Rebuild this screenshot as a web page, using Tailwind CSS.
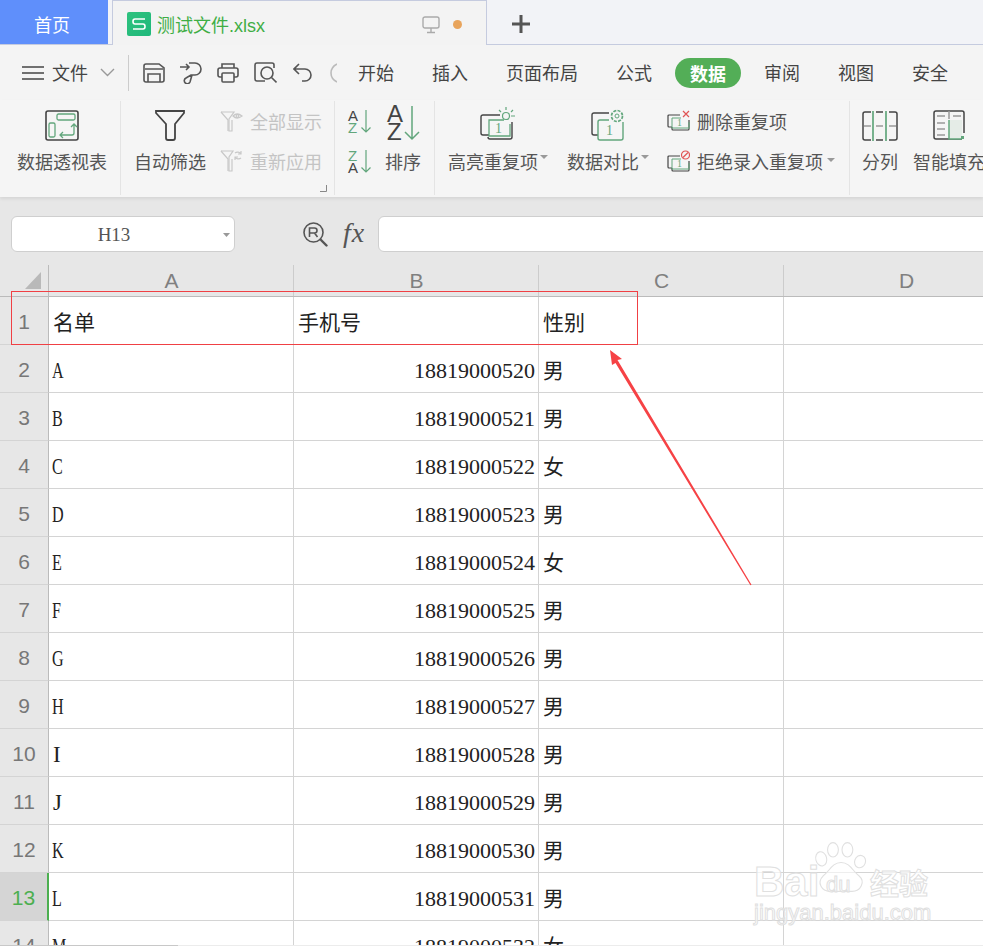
<!DOCTYPE html>
<html lang="zh-CN">
<head>
  <meta charset="UTF-8">
  <title>测试文件.xlsx</title>
  <script src="https://cdn.jsdelivr.net/npm/@tailwindcss/browser@4"></script>
</head>
<body class="bg-white font-['Noto_Sans_CJK_SC','Noto_Sans',sans-serif] text-[#555]">
<div class="relative w-[983px] h-[946px] overflow-hidden">

  <!-- tabs -->
  <div class="flex h-[45px] bg-[#f2f3f7] border-b border-[#c5cbdf]">
    <div class="w-[108px] h-[44px] pt-[5px] pr-[4px] bg-[#5f8ffb] text-white text-[18px] flex items-center justify-center">首页</div>
    <div class="ml-1 w-[375px] h-[45px] bg-[#f3f3f3] border border-b-0 border-[#c5cbdf] flex items-center pl-[14px] relative">
      <div class="w-6 h-6 mt-[1px] rounded-[2px] bg-gradient-to-br from-[#2ec27e] to-[#1fb87b] flex items-center justify-center">
        <svg width="16" height="14" viewBox="0 0 16 14" fill="none" stroke="#fff" stroke-width="1.6"><path d="M14 2H4Q2 2 2 4.5T4 7h8q2 0 2 2.5T12 12H2"/></svg>
      </div>
      <span class="ml-[6px] pt-[5px] text-[18px] text-[#3fae45]">测试文件<span class="font-['Liberation_Sans']">.xlsx</span></span>
      <svg class="ml-[157px] mt-[3px]" width="18" height="18" viewBox="0 0 18 18" fill="none" stroke="#aaa" stroke-width="1.4"><rect x="1" y="1" width="16" height="11" rx="2"/><path d="M9 12v4M5 16.5h8"/></svg>
      <div class="ml-[13px] mt-[2px] w-[9px] h-[9px] rounded-full bg-[#e8a45c]"></div>
    </div>
    <svg class="ml-[25px] mt-[15px]" width="18" height="18" viewBox="0 0 18 18" stroke="#555" stroke-width="3"><path d="M9 0v18M0 9h18"/></svg>
  </div>

  <!-- menu row -->
  <div class="flex items-center h-[55px] bg-[#f4f4f4] pl-[22px] text-[18px] text-[#444]">
    <svg width="22" height="14" viewBox="0 0 22 14" stroke="#444" stroke-width="1.5"><path d="M0 1h22M0 7h22M0 13h22"/></svg>
    <span class="ml-2">文件</span>
    <svg class="ml-3" width="15" height="9" viewBox="0 0 15 9" fill="none" stroke="#999" stroke-width="1.4"><path d="M1 1l6.5 6.5L14 1"/></svg>
    <div class="ml-[13px] w-px h-[36px] bg-[#ccc]"></div>
    <svg class="ml-[14px]" width="22" height="20" viewBox="0 0 22 20" fill="none" stroke="#555" stroke-width="1.6"><path d="M3 1h13l5 4v12q0 2-2 2H3q-2 0-2-2V3q0-2 2-2z"/><path d="M2 6h18M5 19v-8h12v8"/></svg>
    <svg class="ml-[15px]" width="22" height="22" viewBox="0 0 22 22" fill="none" stroke="#555" stroke-width="1.6"><path d="M0 5h9M6 2l3 3-3 3M9 1h6a6 6 0 0 1 0 12h-4l-5 3a3 3 0 1 0 4 4l2-7"/></svg>
    <svg class="ml-[15px]" width="22" height="20" viewBox="0 0 22 20" fill="none" stroke="#555" stroke-width="1.6"><path d="M5 5V1h12v4M5 14H3q-2 0-2-2V7q0-2 2-2h16q2 0 2 2v5q0 2-2 2h-2"/><rect x="5" y="10" width="12" height="9" rx="1"/></svg>
    <svg class="ml-[15px]" width="23" height="22" viewBox="0 0 23 22" fill="none" stroke="#555" stroke-width="1.6"><path d="M20 6V3q0-2-2-2H3Q1 1 1 3v14q0 2 2 2h8"/><circle cx="13" cy="11" r="6"/><path d="M17.5 15.5l5 5"/></svg>
    <svg class="ml-4" width="19" height="19" viewBox="0 0 19 19" fill="none" stroke="#555" stroke-width="1.6"><path d="M6 1L1 6l5 5M1 6h11a6 6 0 0 1 0 12H9"/></svg>
    <svg class="ml-[18px]" width="7" height="20" viewBox="0 0 7 20" fill="none" stroke="#bbb" stroke-width="1.6"><path d="M7 1Q1 4 1 10t6 9"/></svg>
    <div class="ml-[21px] flex items-center gap-[38px]">
      <span>开始</span>
      <span>插入</span>
      <span>页面布局</span>
      <span>公式</span>
      <span class="-ml-[15px] -mr-[15px] px-[15px] h-[30px] leading-[30px] rounded-[15px] bg-[#53ae57] text-white font-bold">数据</span>
      <span>审阅</span>
      <span>视图</span>
      <span>安全</span>
    </div>
  </div>

  <!-- ribbon -->
  <div class="relative z-10 flex h-[97px] pt-px bg-[#f5f5f5] text-[18px] shadow-[0_2px_3px_rgba(0,0,0,0.08)]">
    <div class="shrink-0 w-[121px] h-[94px] pl-1 border-r border-[#e4e4e4] flex justify-center">
      <div class="w-[90px] flex flex-col items-center">
        <div class="h-10 flex items-end">
          <svg width="34" height="31" viewBox="0 0 34 31" fill="none" stroke-width="1.3"><rect x="1" y="1" width="32" height="29" rx="2" stroke="#444" stroke-width="1.6"/><rect x="12" y="4" width="18" height="6" rx="1.5" stroke="#62a67c"/><rect x="4" y="13" width="6" height="14" rx="1.5" stroke="#62a67c"/><path d="M15 25h12q2 0 2-2v-8M26 17l3-3 3 3M18 22l-3 3 3 3" stroke="#62a67c"/></svg>
        </div>
        <div class="h-10 flex items-center whitespace-nowrap">数据透视表</div>
      </div>
    </div>

    <div class="shrink-0 relative w-[214px] h-[94px] pl-[13px] border-r border-[#e4e4e4] flex">
      <div class="w-[72px] flex flex-col items-center">
        <div class="h-10 flex items-end">
          <svg width="32" height="32" viewBox="0 0 32 32" fill="none" stroke="#444" stroke-width="1.8"><path d="M2 2h28v2L21 15v14q0 2-2 2h-5q-2 0-2-2V15L2 4z"/></svg>
        </div>
        <div class="h-10 flex items-center whitespace-nowrap">自动筛选</div>
      </div>
      <div class="ml-[14px] text-[#c4c4c4]">
        <div class="h-10 flex items-center gap-[7px]">
          <svg width="23" height="21" viewBox="0 0 23 21" fill="none" stroke="#c8c8c8" stroke-width="1.2"><path d="M1 1h13l-5 7v12h3V9"/><path d="M1 1l7 8v11"/><path d="M13 5q4-4 9 0q-5 4-9 0z"/><circle cx="17.5" cy="5" r="1.3"/></svg>
          <span>全部显示</span>
        </div>
        <div class="h-10 flex items-center gap-[7px]">
          <svg width="23" height="22" viewBox="0 0 23 22" fill="none" stroke="#c8c8c8" stroke-width="1.2"><path d="M1 1h12l-4 6v14h3V9"/><path d="M1 1l7 8v12"/><path d="M21 4a4 4 0 0 0-6-1M15 7a4 4 0 0 0 6 1M21 1v3h-3M15 10V7h3"/></svg>
          <span>重新应用</span>
        </div>
      </div>
      <svg class="absolute left-[199px] top-[84px]" width="7" height="7" viewBox="0 0 7 7" fill="none" stroke="#888"><path d="M6.5 0v6.5H0"/></svg>
    </div>

    <div class="shrink-0 w-[100px] h-[94px] pl-3 border-r border-[#e4e4e4] flex">
      <div class="w-[25px]">
        <div class="h-10 flex items-center">
          <svg class="overflow-visible" width="25" height="25" viewBox="0 0 25 25" fill="none" font-family="Liberation Sans" font-size="15"><text x="1" y="12" fill="#444">A</text><text x="1" y="24" fill="#62a67c">Z</text><path d="M19 1v22M14.5 18.5l4.5 4.5 4.5-4.5" stroke="#62a67c" stroke-width="1.2"/></svg>
        </div>
        <div class="h-10 flex items-center">
          <svg class="overflow-visible" width="25" height="25" viewBox="0 0 25 25" fill="none" font-family="Liberation Sans" font-size="15"><text x="1" y="12" fill="#62a67c">Z</text><text x="1" y="24" fill="#444">A</text><path d="M19 1v22M14.5 18.5l4.5 4.5 4.5-4.5" stroke="#62a67c" stroke-width="1.2"/></svg>
        </div>
      </div>
      <div class="ml-[13px] w-9 flex flex-col items-center">
        <div class="h-10 flex items-end">
          <svg class="overflow-visible" width="36" height="36" viewBox="0 0 36 36" fill="none" font-family="Liberation Sans" font-size="24"><text x="2" y="17" fill="#444">A</text><text x="2" y="35" fill="#444">Z</text><path d="M27 1v33M20 27l7 7 7-7" stroke="#62a67c" stroke-width="1.5"/></svg>
        </div>
        <div class="h-10 flex items-center whitespace-nowrap">排序</div>
      </div>
    </div>

    <div class="shrink-0 w-[415px] h-[94px] pl-3 border-r border-[#e4e4e4] flex">
      <div class="w-[102px] flex flex-col items-center">
        <div class="h-10 flex items-end">
          <svg width="36" height="34" viewBox="0 0 36 34" fill="none" font-family="Liberation Serif" font-size="14"><path d="M20 8H3Q1 8 1 10v16q0 2 2 2h6" stroke="#444" stroke-width="1.4"/><path d="M32 15v15q0 2-2 2H10q-2 0-2-2" stroke="#444" stroke-width="1.4"/><path d="M24 13H9v16h21V17" stroke="#62a67c" stroke-width="1.3"/><text x="15" y="26" fill="#62a67c">1</text><circle cx="26" cy="9" r="3.5" stroke="#62a67c" stroke-width="1.2"/><path d="M26 0v3M19 3l2 2M33 3l-2 2M31 9h4" stroke="#62a67c" stroke-width="1.2"/></svg>
        </div>
        <div class="h-10 flex items-center whitespace-nowrap">高亮重复项<svg class="mb-2 ml-[2px]" width="8" height="4" viewBox="0 0 8 4"><path d="M0 0h8L4 4z" fill="#999"/></svg></div>
      </div>
      <div class="ml-[17px] w-[84px] flex flex-col items-center">
        <div class="h-10 flex items-end">
          <svg width="34" height="32" viewBox="0 0 34 32" fill="none" font-family="Liberation Serif" font-size="14"><path d="M18 4H3Q1 4 1 6v18q0 2 2 2h4" stroke="#444" stroke-width="1.4"/><path d="M18 11H9q-2 0-2 2v16q0 2 2 2h21q2 0 2-2V13" stroke="#62a67c" stroke-width="1.4"/><text x="15" y="26" fill="#62a67c">1</text><circle cx="26" cy="7" r="5.5" stroke="#62a67c" stroke-width="1.7" stroke-dasharray="3 1.3"/><circle cx="26" cy="7" r="2" stroke="#62a67c"/></svg>
        </div>
        <div class="h-10 flex items-center whitespace-nowrap">数据对比<svg class="mb-2 ml-[2px]" width="8" height="4" viewBox="0 0 8 4"><path d="M0 0h8L4 4z" fill="#999"/></svg></div>
      </div>
      <div class="ml-[17px]">
        <div class="h-10 flex items-center gap-[7px]">
          <svg width="23" height="22" viewBox="0 0 23 22" fill="none" font-family="Liberation Serif" font-size="10"><path d="M13 5H2Q1 5 1 6v10q0 1 1 1h3M5 17v2q0 1 1 1h15q1 0 1-1V10" stroke="#444" stroke-width="1.2"/><path d="M14 8H5v10h17v-6" stroke="#62a67c"/><text x="10" y="16" fill="#62a67c">1</text><path d="M16 1l6 6M22 1l-6 6" stroke="#e05555" stroke-width="1.2"/></svg>
          <span>删除重复项</span>
        </div>
        <div class="h-10 flex items-center gap-[7px]">
          <svg width="23" height="22" viewBox="0 0 23 22" fill="none" font-family="Liberation Serif" font-size="10"><path d="M13 6H2Q1 6 1 7v10q0 1 1 1h3M5 18v2q0 1 1 1h15q1 0 1-1V11" stroke="#444" stroke-width="1.2"/><path d="M14 9H5v10h17v-6" stroke="#62a67c"/><text x="10" y="17" fill="#62a67c">1</text><circle cx="18.5" cy="5" r="4" stroke="#e05555" stroke-width="1.2"/><path d="M16 7.5L21 2.5" stroke="#e05555" stroke-width="1.2"/></svg>
          <span class="whitespace-nowrap">拒绝录入重复项</span>
          <svg class="-ml-[3px] mb-[2px]" width="8" height="4" viewBox="0 0 8 4"><path d="M0 0h8L4 4z" fill="#999"/></svg>
        </div>
      </div>
    </div>

    <div class="shrink-0 pl-3 flex">
      <div class="w-9 flex flex-col items-center">
        <div class="h-10 flex items-end">
          <svg width="36" height="30" viewBox="0 0 36 30" fill="none" stroke-width="1.5"><path d="M9 1H3Q1 1 1 3v24q0 2 2 2h6M27 1h6q2 0 2 2v24q0 2-2 2h-6M14 1h7M14 29h7" stroke="#444"/><path d="M2 15h7M14 15h7M27 15h7" stroke="#999"/><path d="M11 0v30M24 0v30" stroke="#62a67c" stroke-width="1.7"/></svg>
        </div>
        <div class="h-10 flex items-center whitespace-nowrap">分列</div>
      </div>
      <div class="ml-[15px] w-[72px] flex flex-col items-center">
        <div class="h-10 flex items-end">
          <svg width="32" height="31" viewBox="0 0 32 31" fill="none" stroke-width="1.5"><path d="M29 29H3q-2 0-2-2V3q0-2 2-2h26q2 0 2 2v20" stroke="#444"/><path d="M16 1v8M4 6h8M20 6h8M4 13h8M4 19h8M4 25h8" stroke="#999"/><rect x="16" y="10" width="13" height="19" fill="#e5ece7"/><path d="M16 10v19h13" stroke="#62a67c"/><rect x="28" y="26" width="3" height="3" fill="#62a67c"/></svg>
        </div>
        <div class="h-10 flex items-center whitespace-nowrap">智能填充</div>
      </div>
    </div>
  </div>

  <!-- formula bar -->
  <div class="flex h-[55px] pt-[19px] pl-[11px] bg-[#e7e7e7]">
    <div class="shrink-0 relative w-[224px] h-9 bg-white border border-[#cfcfcf] rounded-[6px] flex items-center justify-center font-['Liberation_Serif',serif] text-[19px] text-[#555] pr-[18px] pt-[3px]">
      H13
      <svg class="absolute right-[4px] top-[16px]" width="7" height="4" viewBox="0 0 7 4"><path d="M0 0h7L3.5 4z" fill="#999"/></svg>
    </div>
    <svg class="shrink-0 ml-[68px] mt-[6px]" width="25" height="25" viewBox="0 0 25 25" fill="none" stroke="#555" stroke-width="1.6"><circle cx="10.5" cy="10.5" r="9.5"/><path d="M6.5 15V6h5a2.5 2.5 0 0 1 0 5h-5M11.5 11l3 4"/><path d="M17.5 17.5l6 6" stroke-width="2.4" stroke-linecap="round"/></svg>
    <span class="shrink-0 w-[35px] ml-[15px] mt-[2px] font-['Liberation_Serif',serif] italic text-[28px] leading-[30px] tracking-[1px] text-[#555]">fx</span>
    <div class="flex-1 -mr-3 h-9 bg-white border border-[#cfcfcf] rounded-[6px]"></div>
  </div>

  <!-- column headers -->
  <div class="grid grid-cols-[49px_245px_245px_245px_245px] h-[45px] bg-[#e7e7e7] border-b border-[#bbb] font-['Liberation_Sans',sans-serif] text-[21px] text-[#808080]">
    <div class="relative after:absolute after:right-0 after:top-[13px] after:bottom-0 after:w-px after:bg-[#bbb]">
      <svg class="absolute left-[25px] top-[20px]" width="16" height="17" viewBox="0 0 16 17"><path d="M16 0v17H0z" fill="#b9b9b9"/></svg>
    </div>
    <div class="relative flex items-end justify-center after:absolute after:right-0 after:top-[13px] after:bottom-0 after:w-px after:bg-[#ccc]">A</div>
    <div class="relative flex items-end justify-center after:absolute after:right-0 after:top-[13px] after:bottom-0 after:w-px after:bg-[#ccc]">B</div>
    <div class="relative flex items-end justify-center after:absolute after:right-0 after:top-[13px] after:bottom-0 after:w-px after:bg-[#ccc]">C</div>
    <div class="relative flex items-end justify-center">D</div>
  </div>

  <!-- sheet -->
  <div class="font-['Liberation_Serif','Noto_Sans_CJK_SC',serif] text-[21px] text-[#222] *:grid *:grid-cols-[49px_245px_245px_245px_245px] *:h-12">
    <div class="*:border-r *:border-b *:border-[#d4d4d4] *:flex *:items-center *:pt-[6px] *:pl-[4px]">
      <div class="bg-[#e7e7e7] border-r-[#bbb]! justify-center pl-0! pt-[3px]! font-['Liberation_Sans'] text-[21px] text-[#777]">1</div>
      <div>名单</div><div>手机号</div><div>性别</div><div></div>
    </div>
    <div class="*:border-r *:border-b *:border-[#d4d4d4] *:flex *:items-center *:pt-[6px] *:pl-[4px]">
      <div class="bg-[#e7e7e7] border-r-[#bbb]! justify-center pl-0! pt-[3px]! font-['Liberation_Sans'] text-[21px] text-[#777]">2</div>
      <div><span class="-ml-px origin-left scale-x-[0.7] text-[23px]">A</span></div><div class="justify-end pr-[3px] pt-[3px]! text-[22px]">18819000520</div><div>男</div><div></div>
    </div>
    <div class="*:border-r *:border-b *:border-[#d4d4d4] *:flex *:items-center *:pt-[6px] *:pl-[4px]">
      <div class="bg-[#e7e7e7] border-r-[#bbb]! justify-center pl-0! pt-[3px]! font-['Liberation_Sans'] text-[21px] text-[#777]">3</div>
      <div><span class="-ml-px origin-left scale-x-[0.7] text-[23px]">B</span></div><div class="justify-end pr-[3px] pt-[3px]! text-[22px]">18819000521</div><div>男</div><div></div>
    </div>
    <div class="*:border-r *:border-b *:border-[#d4d4d4] *:flex *:items-center *:pt-[6px] *:pl-[4px]">
      <div class="bg-[#e7e7e7] border-r-[#bbb]! justify-center pl-0! pt-[3px]! font-['Liberation_Sans'] text-[21px] text-[#777]">4</div>
      <div><span class="-ml-px origin-left scale-x-[0.7] text-[23px]">C</span></div><div class="justify-end pr-[3px] pt-[3px]! text-[22px]">18819000522</div><div>女</div><div></div>
    </div>
    <div class="*:border-r *:border-b *:border-[#d4d4d4] *:flex *:items-center *:pt-[6px] *:pl-[4px]">
      <div class="bg-[#e7e7e7] border-r-[#bbb]! justify-center pl-0! pt-[3px]! font-['Liberation_Sans'] text-[21px] text-[#777]">5</div>
      <div><span class="-ml-px origin-left scale-x-[0.7] text-[23px]">D</span></div><div class="justify-end pr-[3px] pt-[3px]! text-[22px]">18819000523</div><div>男</div><div></div>
    </div>
    <div class="*:border-r *:border-b *:border-[#d4d4d4] *:flex *:items-center *:pt-[6px] *:pl-[4px]">
      <div class="bg-[#e7e7e7] border-r-[#bbb]! justify-center pl-0! pt-[3px]! font-['Liberation_Sans'] text-[21px] text-[#777]">6</div>
      <div><span class="-ml-px origin-left scale-x-[0.7] text-[23px]">E</span></div><div class="justify-end pr-[3px] pt-[3px]! text-[22px]">18819000524</div><div>女</div><div></div>
    </div>
    <div class="*:border-r *:border-b *:border-[#d4d4d4] *:flex *:items-center *:pt-[6px] *:pl-[4px]">
      <div class="bg-[#e7e7e7] border-r-[#bbb]! justify-center pl-0! pt-[3px]! font-['Liberation_Sans'] text-[21px] text-[#777]">7</div>
      <div><span class="-ml-px origin-left scale-x-[0.7] text-[23px]">F</span></div><div class="justify-end pr-[3px] pt-[3px]! text-[22px]">18819000525</div><div>男</div><div></div>
    </div>
    <div class="*:border-r *:border-b *:border-[#d4d4d4] *:flex *:items-center *:pt-[6px] *:pl-[4px]">
      <div class="bg-[#e7e7e7] border-r-[#bbb]! justify-center pl-0! pt-[3px]! font-['Liberation_Sans'] text-[21px] text-[#777]">8</div>
      <div><span class="-ml-px origin-left scale-x-[0.7] text-[23px]">G</span></div><div class="justify-end pr-[3px] pt-[3px]! text-[22px]">18819000526</div><div>男</div><div></div>
    </div>
    <div class="*:border-r *:border-b *:border-[#d4d4d4] *:flex *:items-center *:pt-[6px] *:pl-[4px]">
      <div class="bg-[#e7e7e7] border-r-[#bbb]! justify-center pl-0! pt-[3px]! font-['Liberation_Sans'] text-[21px] text-[#777]">9</div>
      <div><span class="-ml-px origin-left scale-x-[0.7] text-[23px]">H</span></div><div class="justify-end pr-[3px] pt-[3px]! text-[22px]">18819000527</div><div>男</div><div></div>
    </div>
    <div class="*:border-r *:border-b *:border-[#d4d4d4] *:flex *:items-center *:pt-[6px] *:pl-[4px]">
      <div class="bg-[#e7e7e7] border-r-[#bbb]! justify-center pl-0! pt-[3px]! font-['Liberation_Sans'] text-[21px] text-[#777]">10</div>
      <div><span class="text-[23px]">I</span></div><div class="justify-end pr-[3px] pt-[3px]! text-[22px]">18819000528</div><div>男</div><div></div>
    </div>
    <div class="*:border-r *:border-b *:border-[#d4d4d4] *:flex *:items-center *:pt-[6px] *:pl-[4px]">
      <div class="bg-[#e7e7e7] border-r-[#bbb]! justify-center pl-0! pt-[3px]! font-['Liberation_Sans'] text-[21px] text-[#777]">11</div>
      <div><span class="text-[23px]">J</span></div><div class="justify-end pr-[3px] pt-[3px]! text-[22px]">18819000529</div><div>男</div><div></div>
    </div>
    <div class="*:border-r *:border-b *:border-[#d4d4d4] *:flex *:items-center *:pt-[6px] *:pl-[4px]">
      <div class="bg-[#e7e7e7] border-r-[#bbb]! justify-center pl-0! pt-[3px]! font-['Liberation_Sans'] text-[21px] text-[#777]">12</div>
      <div><span class="-ml-px origin-left scale-x-[0.7] text-[23px]">K</span></div><div class="justify-end pr-[3px] pt-[3px]! text-[22px]">18819000530</div><div>男</div><div></div>
    </div>
    <div class="*:border-r *:border-b *:border-[#d4d4d4] *:flex *:items-center *:pt-[6px] *:pl-[4px]">
      <div class="bg-[#d5d5d5] border-r-2! border-r-[#4caf50]! justify-center pl-0! pt-[3px]! font-['Liberation_Sans'] text-[21px] text-[#4caf50]">13</div>
      <div><span class="-ml-px origin-left scale-x-[0.7] text-[23px]">L</span></div><div class="justify-end pr-[3px] pt-[3px]! text-[22px]">18819000531</div><div>男</div><div></div>
    </div>
    <div class="*:border-r *:border-b *:border-[#d4d4d4] *:flex *:items-center *:pt-[6px] *:pl-[4px]">
      <div class="bg-[#e7e7e7] border-r-[#bbb]! justify-center pl-0! pt-[3px]! font-['Liberation_Sans'] text-[21px] text-[#777]">14</div>
      <div><span class="-ml-px origin-left scale-x-[0.7] text-[23px]">M</span></div><div class="justify-end pr-[3px] pt-[3px]! text-[22px]">18819000532</div><div>女</div><div></div>
    </div>
  </div>

  <!-- bottom edge of the capture -->
  <div class="absolute left-0 bottom-0 w-full h-px bg-[#ececec]"></div>
  <div class="absolute left-0 bottom-0 w-[178px] h-px bg-[#c8c8c8]"></div>

  <!-- red annotations -->
  <div class="absolute left-[11px] top-[291px] w-[627px] h-[54px] border border-[#f04044]"></div>
  <svg class="absolute left-0 top-0 pointer-events-none" width="983" height="946" viewBox="0 0 983 946">
    <path d="M610 350l12 9-4.5 1L751.5 584.7 750.4 585.3 615.5 363l-3.5 2z" fill="#f64245"/>
  </svg>

  <!-- watermark -->
  <div class="absolute left-[752px] top-[838px] w-[180px] h-[90px] font-['Liberation_Sans',sans-serif]">
    <svg class="absolute left-[62px] top-[2px]" width="56" height="54" viewBox="0 0 62 58" fill="#ffffff" fill-opacity="0.6" stroke="#e0e0e0" stroke-width="1.2">
      <ellipse cx="8" cy="20" rx="6" ry="8" transform="rotate(-15 8 20)"/>
      <ellipse cx="21" cy="10" rx="6" ry="8"/>
      <ellipse cx="37" cy="10" rx="6" ry="8"/>
      <ellipse cx="51" cy="23" rx="6" ry="7" transform="rotate(20 51 23)"/>
      <path d="M30 24c10 0 13 10 20 15 7 6 2 17-8 17H18C8 56 3 46 10 39c7-5 10-15 20-15z"/>
    </svg>
    <span class="absolute left-[2px] top-[23px] text-[42px] leading-[42px] font-bold text-white/70 [-webkit-text-stroke:1px_#e0e0e0]">Bai</span>
    <span class="absolute left-[74px] top-[35px] text-[22px] leading-[24px] text-white/70 [-webkit-text-stroke:1px_#e0e0e0]">du</span>
    <span class="absolute left-[118px] top-[28px] text-[29px] leading-[32px] font-['Noto_Sans_CJK_SC'] font-bold text-white/70 [-webkit-text-stroke:1px_#e0e0e0]">经验</span>
    <span class="absolute left-[2px] top-[63px] text-[22px] leading-[24px] text-white/70 [-webkit-text-stroke:1px_#e0e0e0]">jingyan.baidu.com</span>
  </div>
</div>
</body>
</html>
